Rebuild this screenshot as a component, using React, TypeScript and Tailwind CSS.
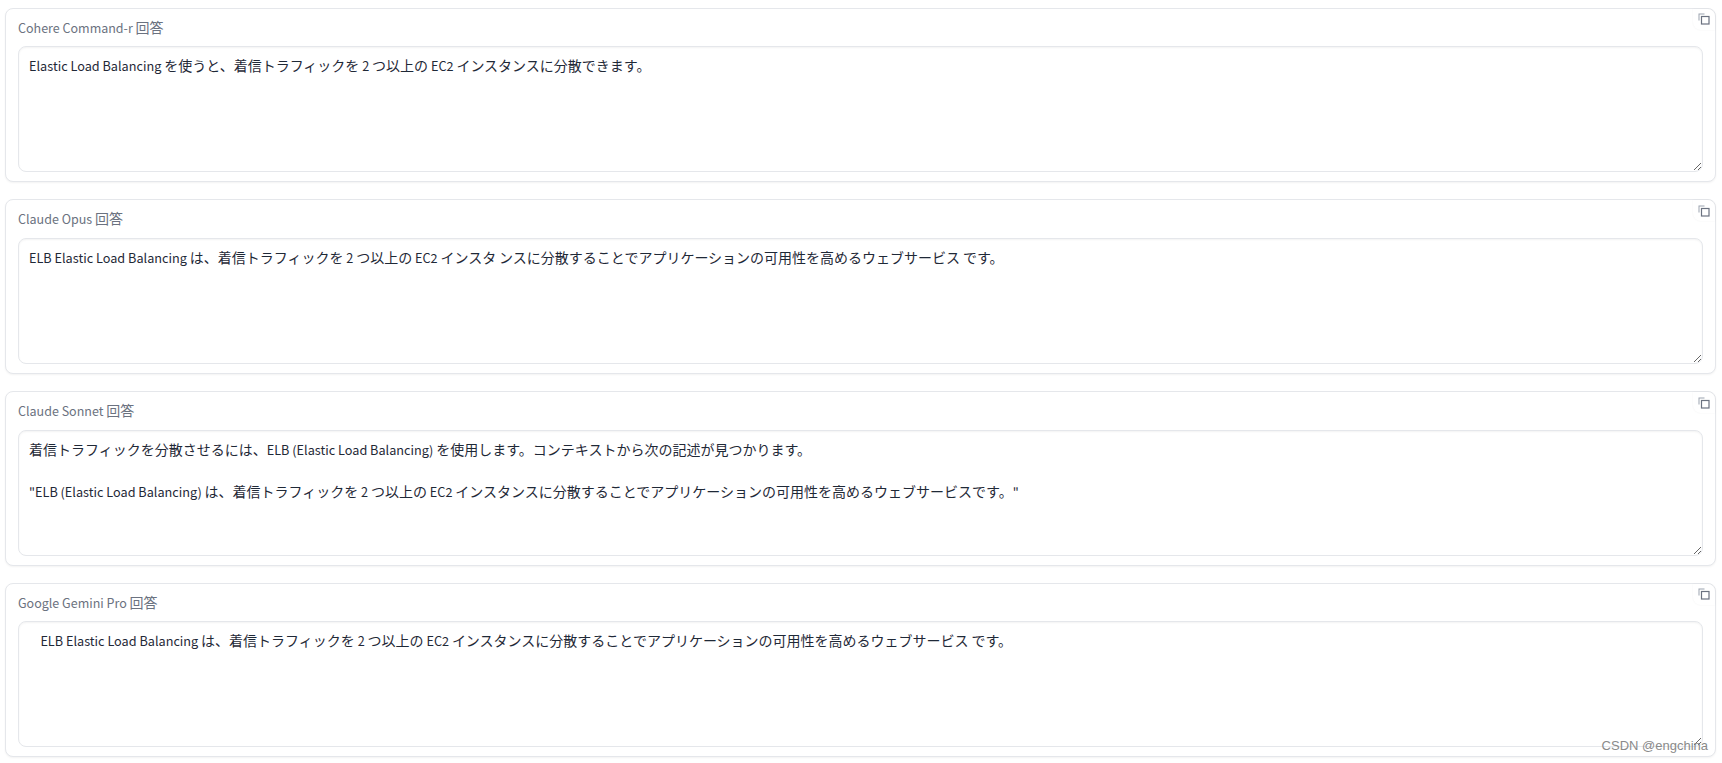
import React from "react";

const answers = [
  {
    label: "Cohere Command-r 回答",
    text: "Elastic Load Balancing を使うと、着信トラフィックを 2 つ以上の EC2 インスタンスに分散できます。",
  },
  {
    label: "Claude Opus 回答",
    text: "ELB Elastic Load Balancing は、着信トラフィックを 2 つ以上の EC2 インスタ ンスに分散することでアプリケーションの可用性を高めるウェブサービス です。",
  },
  {
    label: "Claude Sonnet 回答",
    text: '着信トラフィックを分散させるには、ELB (Elastic Load Balancing) を使用します。コンテキストから次の記述が見つかります。\n\n"ELB (Elastic Load Balancing) は、着信トラフィックを 2 つ以上の EC2 インスタンスに分散することでアプリケーションの可用性を高めるウェブサービスです。"',
  },
  {
    label: "Google Gemini Pro 回答",
    text: "    ELB Elastic Load Balancing は、着信トラフィックを 2 つ以上の EC2 インスタンスに分散することでアプリケーションの可用性を高めるウェブサービス です。",
  },
];

// latin runs are set smaller than the CJK ones, the CJK font's latin glyphs run large
const MixedText = ({ text, latinClass }: { text: string; latinClass: string }) => (
  <>
    {text.split(/([\x00-\x7f]+)/).map((part, i) =>
      i % 2 === 1 ? (
        <span key={i} className={latinClass}>
          {part}
        </span>
      ) : (
        <span key={i}>{part}</span>
      )
    )}
  </>
);

const CopyIcon = () => (
  <svg width="12" height="12" viewBox="0 0 12 12" fill="none">
    <path d="M0.5 0.5H6.5V1.5H1.5V7.5H0.5Z" fill="#9ca3af" />
    <rect x="3.5" y="3.5" width="7.5" height="7.5" stroke="#6b7280" strokeWidth="1.2" />
  </svg>
);

const AnswerCard = ({ label, text }: { label: string; text: string }) => (
  <div className="relative h-[174.67px] rounded-lg border border-[#e5e7eb] bg-white px-3 pt-2 shadow-[0_1px_2px_rgba(0,0,0,0.05)]">
    <button className="absolute top-0 right-0 flex h-[21px] w-[22px] items-center justify-center rounded-tr-lg rounded-bl-lg bg-white shadow-[0_0_2px_rgba(0,0,0,0.06)]">
      <CopyIcon />
    </button>
    <label className="block h-[20px] text-[14px] leading-5 text-[#6b7280]">
      <MixedText text={label} latinClass="text-[12.5px]" />
    </label>
    <div className="mt-[9.4px] h-[126px] w-full resize-y overflow-auto rounded-lg border border-[#e5e7eb] bg-white px-[10px] py-2 text-[14px] leading-[21px] whitespace-pre-wrap text-[#1f2937] shadow-[inset_0_1px_2px_rgba(0,0,0,0.05)]">
      <MixedText text={text} latinClass="text-[12.7px]" />
    </div>
  </div>
);

export default function App() {
  return (
    <div className="relative h-[763px] w-full overflow-hidden bg-white font-['Noto_Sans_CJK_JP','Noto_Sans',sans-serif]">
      <div className="flex flex-col gap-[17px] pt-[7.8px] pr-[6px] pl-[5px]">
        {answers.map((a) => (
          <AnswerCard key={a.label} label={a.label} text={a.text} />
        ))}
      </div>
      <span className="absolute right-[14px] bottom-[9px] font-['Liberation_Sans',sans-serif] text-[13px] leading-4 text-[#8a8a8a]">
        CSDN @engchina
      </span>
    </div>
  );
}
